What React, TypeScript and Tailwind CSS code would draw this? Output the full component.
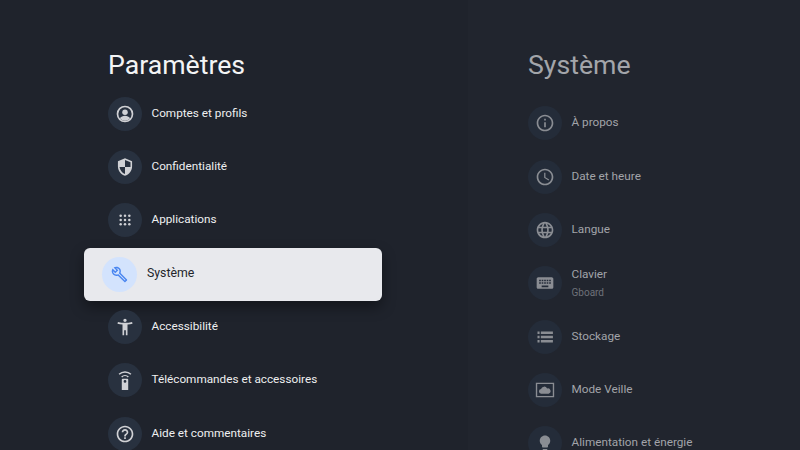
import { MdOutlineBuild, MdAccessibilityNew, MdHelpOutline, MdInfoOutline, MdAccessTime, MdLanguage, MdKeyboard, MdLightbulb } from "react-icons/md";
import type { ReactNode } from "react";

const Account = () => (
  <svg viewBox="0 0 24 24" width="20" height="20" fill="currentColor">
    <path fillRule="evenodd" d="M12 2a10 10 0 1 0 0 20 10 10 0 0 0 0-20zm0 2a8 8 0 1 1 0 16 8 8 0 0 1 0-16z" />
    <circle cx="12" cy="10" r="3.300" />
    <path d="M5.800 17.200c1.300-2 3.700-3.100 6.200-3.100s4.900 1.100 6.200 3.100A8 8 0 0 1 12 20a8 8 0 0 1-6.200-2.800z" />
  </svg>
);

const Shield = () => (
  <svg viewBox="0 0 24 24" width="20" height="20" fill="currentColor">
    <path fillRule="evenodd" d="M12 1.500 3.500 5v6c0 5.300 3.600 10.100 8.500 11.500 4.900-1.400 8.500-6.200 8.500-11.500V5zM12 12V3.700l6.600 2.700V12zm0 0v8.400c-3.500-1.200-6-4.600-6.600-8.400z" />
  </svg>
);

const Apps = () => (
  <svg viewBox="0 0 24 24" width="20" height="20" fill="currentColor">
    {[6.800, 12, 17.200].map((y) =>
      [6.800, 12, 17.200].map((x) => <circle key={`${x}-${y}`} cx={x} cy={y} r="1.500" />)
    )}
  </svg>
);

const Storage = () => (
  <svg viewBox="0 0 24 24" width="20" height="20" fill="currentColor">
    <path d="M3 5.500h2.500v2.800H3zM7 5.500h14.500v2.800H7zM3 10.600h2.500v2.800H3zM7 10.600h14.500v2.800H7zM3 15.700h2.500v2.800H3zM7 15.700h14.500v2.800H7z" />
  </svg>
);

const Remote = () => (
  <svg viewBox="0 0 24 24" width="22" height="22" fill="currentColor">
    <path fillRule="evenodd" d="M9.500 10.500h5a1 1 0 0 1 1 1V23h-7V11.500a1 1 0 0 1 1-1zm2.500 1.500a1.500 1.500 0 1 0 0 3 1.500 1.500 0 0 0 0-3z" />
    <path d="M7.800 8.200a6 6 0 0 1 8.400 0l-1.100 1.100a4.400 4.400 0 0 0-6.200 0zM5 5.300a10 10 0 0 1 14 0l-1.100 1.100a8.400 8.400 0 0 0-11.800 0z" />
  </svg>
);

const Sleep = () => (
  <svg viewBox="0 0 24 24" width="22" height="22" fill="currentColor">
    <path fillRule="evenodd" d="M2 4h20v16H2zm1.500 1.500v13h17v-13z" />
    <path d="M8 16a2.500 2.500 0 0 1-.3-5 3.500 3.500 0 0 1 6.600-.6 2.800 2.800 0 0 1 1.700 5.600z" />
  </svg>
);

function Row({ icon, label, sub, dim }: { icon: ReactNode; label: string; sub?: string; dim?: boolean }) {
  return (
    <div className="h-[53.3px] flex items-center shrink-0">
      <div className={`w-[34px] h-[34px] rounded-full flex items-center justify-center shrink-0 ${dim ? "bg-[#242c39] text-[#8a8d93]" : "bg-[#28313f] text-[#d0d1d5]"}`}>
        {icon}
      </div>
      <div className="ml-[9.500px] -mt-[2px] flex flex-col">
        <span className={`text-[11.75px] leading-[16px] ${dim ? "text-[#a2a4a9]" : "text-[#eeeff0]"}`}>{label}</span>
        {sub && <span className="text-[10px] leading-[12px] mt-[5px] text-[#6e7179]">{sub}</span>}
      </div>
    </div>
  );
}

export default function App() {
  return (
    <div className="w-[800px] h-[450px] overflow-hidden flex bg-[#1f232c] font-['Roboto',sans-serif]">
      <div className="w-[468px] shrink-0 pl-[108px] flex flex-col">
        <h1 className="mt-[47px] h-[36px] text-[26.67px] leading-[36px] font-normal text-[#f3f4f5] shrink-0">Paramètres</h1>
        <div className="mt-[4.200px] flex flex-col w-[274px]">
          <Row icon={<Account />} label="Comptes et profils" />
          <Row icon={<Shield />} label="Confidentialité" />
          <Row icon={<Apps />} label="Applications" />
          <div className="h-[53.3px] shrink-0 flex items-center -ml-[24px] w-[298px]">
            <div className="w-full h-[53px] mt-[1px] rounded-[6px] bg-[#e8e9ed] flex items-center pl-[17.500px] shadow-[0_6px_14px_rgba(0,0,0,0.4)]">
              <div className="w-[35px] h-[35px] rounded-full bg-[#d3e3fd] text-[#4a86f0] flex items-center justify-center shrink-0">
                <MdOutlineBuild size={17} />
              </div>
              <span className="ml-[10.500px] -mt-[3px] text-[12.3px] leading-[16px] text-[#23252b]">Système</span>
            </div>
          </div>
          <Row icon={<MdAccessibilityNew size={20} />} label="Accessibilité" />
          <Row icon={<Remote />} label="Télécommandes et accessoires" />
          <Row icon={<MdHelpOutline size={20} />} label="Aide et commentaires" />
        </div>
      </div>
      <div className="flex-1 bg-[#21252e] pl-[60px] flex flex-col">
        <h2 className="mt-[47px] h-[36px] text-[26.67px] leading-[36px] font-normal text-[#a3a5aa] shrink-0">Système</h2>
        <div className="mt-[13.800px] flex flex-col">
          <Row dim icon={<MdInfoOutline size={20} />} label="À propos" />
          <Row dim icon={<MdAccessTime size={20} />} label="Date et heure" />
          <Row dim icon={<MdLanguage size={20} />} label="Langue" />
          <Row dim icon={<MdKeyboard size={20} />} label="Clavier" sub="Gboard" />
          <Row dim icon={<Storage />} label="Stockage" />
          <Row dim icon={<Sleep />} label="Mode Veille" />
          <Row dim icon={<MdLightbulb size={18} />} label="Alimentation et énergie" />
        </div>
      </div>
    </div>
  );
}
